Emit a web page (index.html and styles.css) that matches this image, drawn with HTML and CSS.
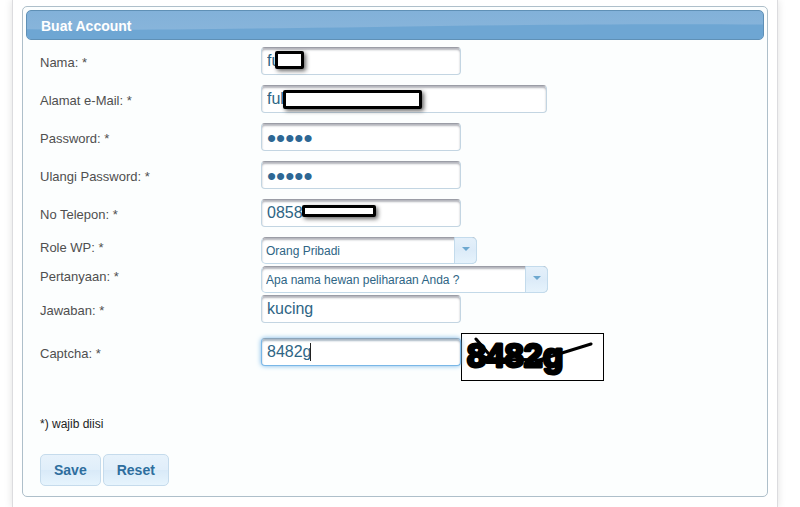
FILE: index.html
```html
<!DOCTYPE html>
<html lang="id">
  <head>
    <meta charset="UTF-8" />
    <meta name="viewport" content="width=device-width, initial-scale=1.0" />
    <title>Buat Account</title>
    <link rel="stylesheet" href="styles.css">
  </head>
  <body>
    <div class="page">
      <form class="panel" id="accountForm">
        <h2 class="panel-title">
          <svg class="gloss" viewBox="0 0 738 29" preserveAspectRatio="none" aria-hidden="true">
            <path d="M0 19 C180 22 420 12 738 14 V29 H0 Z" />
          </svg>
          <span>Buat Account</span>
        </h2>
        <div class="panel-content">
          <div class="row">
            <label for="nama">Nama: *</label>
            <div class="field">
              <input class="text" type="text" id="nama" name="nama" value="fu" />
              <span class="mask mask-nama"></span>
            </div>
          </div>
          <div class="row">
            <label for="email">Alamat e-Mail: *</label>
            <div class="field wide">
              <input class="text" type="text" id="email" name="email" value="ful" />
              <span class="mask mask-email"></span>
            </div>
          </div>
          <div class="row">
            <label for="password">Password: *</label>
            <div class="field">
              <input class="text" type="password" id="password" name="password" value="12345" />
            </div>
          </div>
          <div class="row">
            <label for="ulangi">Ulangi Password: *</label>
            <div class="field">
              <input class="text" type="password" id="ulangi" name="ulangi" value="12345" />
            </div>
          </div>
          <div class="row">
            <label for="telepon">No Telepon: *</label>
            <div class="field">
              <input class="text" type="text" id="telepon" name="telepon" value="0858" />
              <span class="mask mask-telepon"></span>
            </div>
          </div>
          <div class="row row-select">
            <label for="role">Role WP: *</label>
            <div class="select select-role">
              <select id="role" name="role">
                <option>Orang Pribadi</option>
              </select>
              <span class="trigger"></span>
            </div>
          </div>
          <div class="row row-select">
            <label for="pertanyaan">Pertanyaan: *</label>
            <div class="select select-question">
              <select id="pertanyaan" name="pertanyaan">
                <option>Apa nama hewan peliharaan Anda ?</option>
              </select>
              <span class="trigger"></span>
            </div>
          </div>
          <div class="row">
            <label for="jawaban">Jawaban: *</label>
            <div class="field">
              <input class="text" type="text" id="jawaban" name="jawaban" value="kucing" />
            </div>
          </div>
          <div class="row row-captcha">
            <label for="captcha">Captcha: *</label>
            <div class="field">
              <input class="text active" type="text" id="captcha" name="captcha" value="8482g" />
              <span class="caret"></span>
            </div>
            <svg class="captcha" viewBox="0 0 141 46" role="img" aria-label="Captcha">
              <text x="5" y="33">8482g</text>
              <path d="M14 5 L26 19 M22 23 C42 29 58 23 80 27" />
              <path d="M74 27 L129 10" />
            </svg>
          </div>
          <p class="note">*) wajib diisi</p>
          <div class="buttons">
            <button type="submit">Save</button>
            <button type="reset">Reset</button>
          </div>
        </div>
      </form>
    </div>
  </body>
</html>
```

FILE: styles.css
```css
* {
  box-sizing: border-box;
}
body {
  font-family: "Liberation Sans", Arial, sans-serif;
  font-size: 13px;
  background-color: #fff;
  color: #4f4f4f;
  margin: 0;
}
.page {
  min-height: 100vh;
  margin: 0 22px 0 12px;
  padding: 6px 9px 10px;
  border: 1px solid #dcdcdf;
  border-width: 0 1px;
  box-shadow: 0 0 8px rgba(0, 0, 0, 0.12);
}
.panel {
  padding: 3px;
  background-color: #fcfefe;
  border: 1px solid #aebfca;
  border-radius: 5px;
}
.panel-title {
  position: relative;
  overflow: hidden;
  margin: 0;
  padding: 0 14px;
  height: 30px;
  line-height: 30px;
  font-size: 14px;
  color: #fff;
  background: linear-gradient(#82b1d9, #8ab6db);
  border: 1px solid #5f90b6;
  border-radius: 5px;
}
.panel-title span {
  position: relative;
}
.gloss {
  position: absolute;
  left: 0;
  top: 0;
  width: 100%;
  height: 100%;
  fill: #6ea6d3;
}
.panel-content {
  padding: 7px 14px;
}
.row {
  display: flex;
  align-items: flex-start;
  margin-bottom: 10px;
}
.row label {
  flex: 0 0 221px;
  line-height: 32px;
  height: 28px;
}
.field {
  position: relative;
  width: 200px;
}
.field.wide {
  width: 286px;
}
.text {
  display: block;
  width: 100%;
  height: 28px;
  padding: 0 5px 1px;
  font-family: "Liberation Sans", Arial, sans-serif;
  font-size: 16px;
  color: #2e6585;
  background-color: #fff;
  border: 1px solid #c3d5e2;
  border-top-color: #9b9da6;
  border-radius: 4px;
  box-shadow: inset 0 2px 2px #b4b5bc;
  outline: none;
}
.text[type="password"] {
  padding: 2px 5px 0;
  font-size: 26px;
  color: #2e6794;
}
.text.active {
  border-color: #79b7e7;
  border-top-color: #8ba5ba;
  box-shadow: 0 0 5px #79b7e7, inset 0 2px 2px #a9b7c4;
}
.caret {
  position: absolute;
  left: 49px;
  top: 5px;
  width: 1px;
  height: 18px;
  background-color: #222;
}
.mask {
  position: absolute;
  background-color: #fff;
  border: 3px solid #000;
  border-radius: 2px;
  box-shadow: 2px 2px 4px rgba(0, 0, 0, 0.6);
}
.mask-nama {
  left: 14px;
  top: 4px;
  width: 29px;
  height: 18px;
}
.mask-email {
  left: 22px;
  top: 5px;
  width: 139px;
  height: 19px;
}
.mask-telepon {
  left: 41px;
  top: 6px;
  width: 74px;
  height: 12px;
}
.row-select {
  margin-bottom: 2px;
}
.row-select label {
  height: 27px;
  line-height: 22px;
}
.select {
  position: relative;
  height: 27px;
}
.select-role {
  width: 216px;
}
.select-question {
  width: 287px;
}
.select select {
  appearance: none;
  width: 100%;
  height: 27px;
  padding: 1px 26px 0 4px;
  font-family: inherit;
  font-size: 12px;
  color: #2e6585;
  background-color: #fff;
  border: 1px solid #c3d9e8;
  border-top-color: #9b9da6;
  border-radius: 5px;
  box-shadow: inset 0 2px 2px #b4b5bc;
  outline: none;
}
.trigger {
  position: absolute;
  right: 0;
  top: 0;
  width: 23px;
  height: 27px;
  background: linear-gradient(#e4f0fa, #dcebf8 50%, #e6f3fc);
  border: 1px solid #c3dbec;
  border-radius: 0 5px 5px 0;
  pointer-events: none;
}
.trigger::after {
  content: "";
  position: absolute;
  left: 7px;
  top: 9px;
  border: 4px solid transparent;
  border-top-color: #6da8cf;
  border-bottom: 0;
}
.row-captcha .field,
.row-captcha label {
  margin-top: 5px;
}
.captcha {
  width: 143px;
  height: 48px;
  background-color: #fff;
  border: 1px solid #000;
}
.captcha text {
  font-family: "Liberation Sans", Arial, sans-serif;
  font-size: 34px;
  font-weight: bold;
  stroke: #000;
  stroke-width: 3px;
  stroke-linejoin: round;
}
.captcha path {
  fill: none;
  stroke: #000;
  stroke-width: 3px;
  stroke-linecap: round;
}
.note {
  margin: 35px 0 22px;
  line-height: 16px;
  font-size: 12px;
  color: #222;
}
.buttons {
  display: flex;
  gap: 2px;
}
button {
  height: 32px;
  padding: 0 13px;
  font-family: inherit;
  font-size: 14px;
  font-weight: bold;
  color: #2e6e9e;
  background: linear-gradient(#e7f2fb, #e0eefa 50%, #d9eaf8 51%, #e6f4fd);
  border: 1px solid #c5dbec;
  border-radius: 5px;
  cursor: pointer;
}
button:hover {
  border-color: #79b7e7;
}
```
